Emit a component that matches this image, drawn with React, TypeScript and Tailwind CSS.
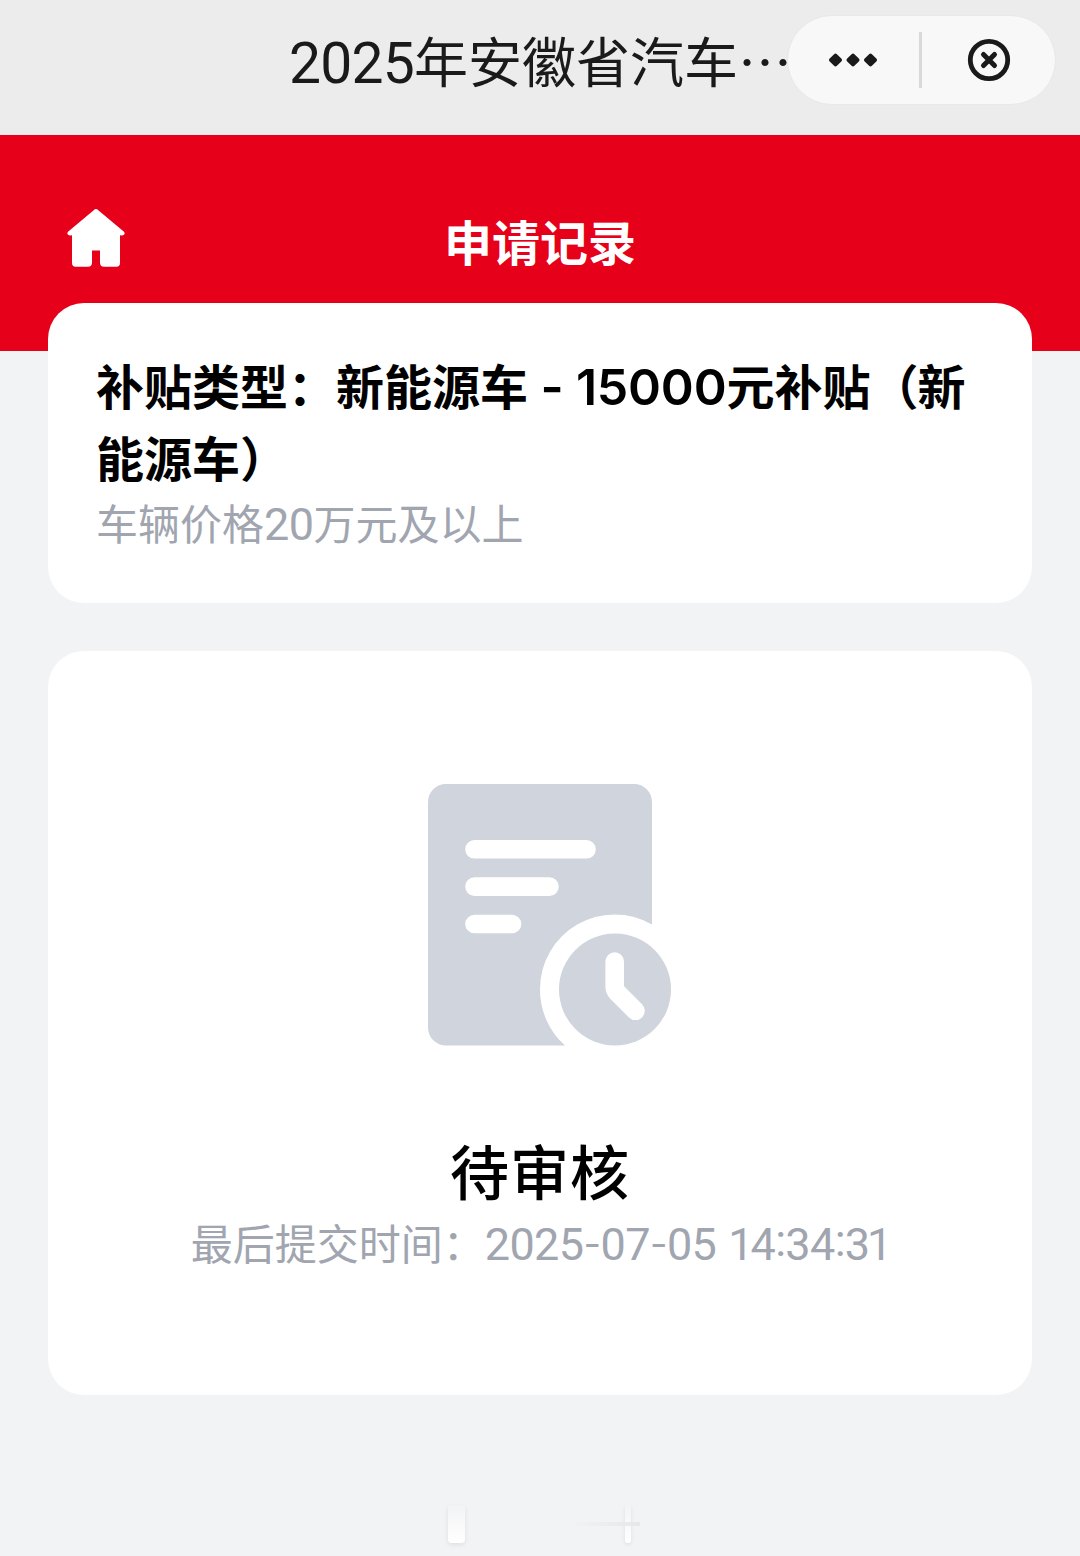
import React from "react";

function HomeIcon() {
  return (
    <svg width="60" height="60" viewBox="0 0 60 60" fill="#fff">
      <path d="M27.700 2.200Q30 0 32.300 2.200L58 23.800Q59.200 25.200 58.200 26.400Q57.200 27.800 54 27.300V55Q54 58.700 50.500 58.700H38Q34 58.700 34 54.500V42.500H26V54.500Q26 58.700 22 58.700H9.500Q6 58.700 6 55V27.300Q2.800 27.800 1.800 26.400Q0.800 25.200 2 23.800Z" />
    </svg>
  );
}

function PendingIcon() {
  return (
    <svg width="244" height="262" viewBox="0 0 244 262">
      <path
        fill="#d0d4dd"
        d="M18 0H206A18 18 0 0 1 224 18V140.500A74.700 74.700 0 0 0 112 205.500A74.700 74.700 0 0 0 137 261.500H18A18 18 0 0 1 0 243.500V18A18 18 0 0 1 18 0Z"
      />
      <g stroke="#fff" strokeWidth="18.600" strokeLinecap="round" fill="none">
        <path d="M46.500 65.300H158.500M46.500 102.600H121.500M46.500 140H84" />
      </g>
      <circle cx="187" cy="205.500" r="56" fill="#d0d4dd" />
      <path
        d="M186.700 177.500V203Q186.700 206 189 208.300L207.500 226.800"
        fill="none"
        stroke="#fff"
        strokeWidth="18.600"
        strokeLinecap="round"
        strokeLinejoin="round"
      />
    </svg>
  );
}

function Capsule() {
  return (
    <div className="absolute left-[787px] top-[15px] flex h-[90px] w-[269px] items-center rounded-full border border-[#e8e8e8] bg-[#f8f8f8]">
      <div className="flex w-[131px] shrink-0 justify-center">
        <svg width="50" height="14" viewBox="0 0 50 14" fill="#1a1a1a" stroke="#1a1a1a" strokeWidth="4" strokeLinejoin="round">
          <path d="M6.500 2.600L10.900 7L6.500 11.400L2.100 7ZM24 2.600L28.400 7L24 11.400L19.600 7ZM41.500 2.600L45.900 7L41.500 11.400L37.100 7Z" />
        </svg>
      </div>
      <div className="h-14 w-[3px] shrink-0 bg-[#d9d9d9]" />
      <div className="flex flex-1 justify-center">
        <svg width="44" height="44" viewBox="0 0 44 44" fill="none" stroke="#1a1a1a" strokeLinecap="round">
          <circle cx="22" cy="22" r="18.700" strokeWidth="4.800" />
          <path d="M16.500 16.500L27.500 27.500M27.500 16.500L16.500 27.500" strokeWidth="5" />
        </svg>
      </div>
    </div>
  );
}

function Dash() {
  return <span className="relative -top-[3px] inline-block w-[17px] text-center font-['Inter'] text-[38px] leading-none">-</span>;
}

function Colon() {
  return <span className="relative -top-[4px] inline-block w-[10px] text-center leading-none">:</span>;
}

function Timestamp() {
  return (
    <span className="font-['Roboto'] text-[45px] leading-none tracking-[-0.6px]">
      2025
      <Dash />
      07
      <Dash />
      05<span className="inline-block w-[12px]"> </span>
      <span className="tracking-[-3px]">1</span>4
      <Colon />
      34
      <Colon />
      <span className="tracking-[-3px]">31</span>
    </span>
  );
}

export default function App() {
  return (
    <div className="relative h-[1556px] w-[1080px] overflow-hidden bg-[#f2f3f5] font-['Noto_Sans_CJK_SC',sans-serif] text-black">
      <header className="relative h-[135px] bg-[#ececec]">
        <h1 className="flex h-[126px] items-center whitespace-nowrap pl-[289px] text-[54px] font-normal leading-none text-[#1a1a1a]">
          <span className="font-['Roboto'] text-[57px] tracking-[-0.8px]">2025</span>
          <span className="-mt-[6px]">年安徽省汽车…</span>
        </h1>
        <Capsule />
      </header>

      <div className="flex h-[216px] items-start bg-[#e60019] px-[66px] pt-[73px]">
        <HomeIcon />
        <h2 className="-ml-[60px] -mt-[2px] flex-1 text-center text-[48px] font-bold leading-[68px] text-white">申请记录</h2>
      </div>

      <main className="relative -mt-12 flex flex-col gap-12 px-12">
        <section className="h-[300px] rounded-[36px] bg-white px-[48px] pt-[45px]">
          <div className="whitespace-nowrap text-[48px] font-bold leading-[72px]">
            <div className="h-[72px]">
              补贴类型：新能源车
              <span className="font-['Inter'] text-[50px] font-semibold leading-none tracking-[-0.2px]">
                {" - "}15000
              </span>
              元补贴<span className="tracking-[-1px]">（</span>新
            </div>
            <div className="h-[72px]">能源车）</div>
          </div>
          <p className="h-[60px] text-[42px] leading-[60px] text-[#a0a5af]">
            车辆价格<span className="font-['Roboto'] text-[45px] leading-none tracking-[-0.6px]">20</span>万元及以上
          </p>
        </section>

        <section className="flex h-[744px] flex-col items-center rounded-[36px] bg-white pt-[133px]">
          <div className="pl-[19px]">
            <PendingIcon />
          </div>
          <div className="mt-[79px] text-[59px] font-medium leading-[90px] tracking-[1px]">待审核</div>
          <p className="-mt-[3px] h-[60px] whitespace-nowrap text-[42px] leading-[60px] text-[#a0a5af]">
            最后提交时间：
            <Timestamp />
          </p>
        </section>
      </main>

      <div className="absolute left-[440px] top-[1505px] flex h-[42px] w-[200px] justify-between">
        <div className="ml-[8px] h-[38px] w-[17px] rounded-b-sm bg-linear-to-b from-transparent to-white shadow-[0_2px_5px_rgba(0,0,0,0.08)]" />
        <div className="mr-[9px] h-[38px] w-[6px] rounded-b-sm bg-linear-to-b from-transparent to-white shadow-[0_2px_4px_rgba(0,0,0,0.08)]" />
        <div className="absolute right-0 top-[17px] h-[4px] w-[70px] bg-linear-to-r from-transparent to-[#e6e7e9]" />
      </div>
    </div>
  );
}
